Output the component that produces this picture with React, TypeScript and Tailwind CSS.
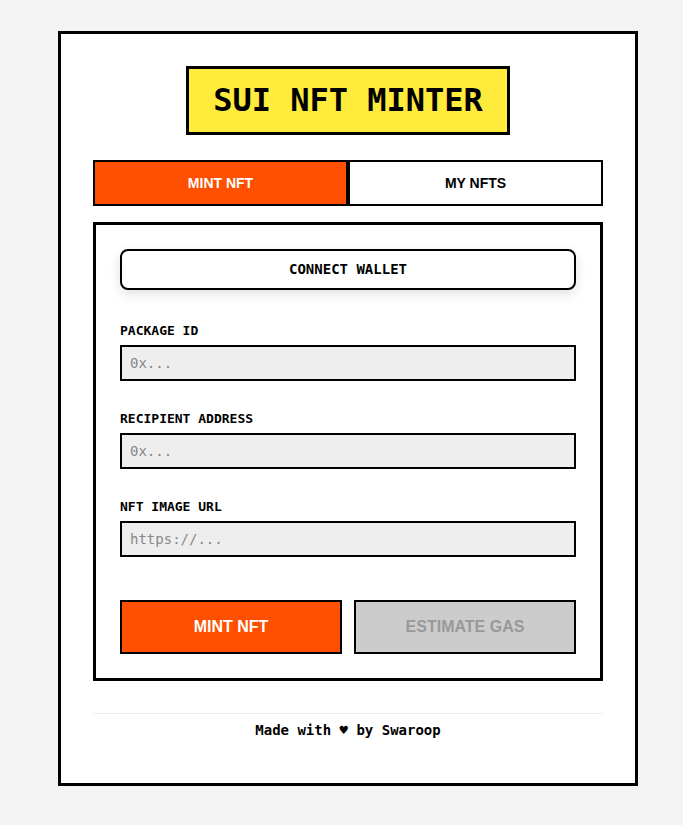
import React from 'react';

const mono = "font-['DejaVu_Sans_Mono',monospace]";
const sans = "font-['Liberation_Sans',Arial,sans-serif]";

type FieldProps = {
  label: string;
  placeholder: string;
};

const Field: React.FC<FieldProps> = ({ label, placeholder }) => {
  return (
    <div className="mb-[30px]">
      <label className={`block mb-[7px] text-[13px] leading-[15px] font-bold text-black ${mono}`}>
        {label}
      </label>
      <input
        className={`block h-[36px] w-full border-2 border-black bg-[#eeeeee] px-2 text-[14px] leading-[16px] outline-none placeholder:text-[#888888] ${mono}`}
        placeholder={placeholder}
      />
    </div>
  );
};

const App: React.FC = () => {
  return (
    <div className="min-h-[825px] bg-[#f4f4f4] pt-[31px] pb-10">
      <div className="ml-[58px] w-[580px] border-[3px] border-black bg-white p-8">
        <div className="flex justify-center">
          <h1
            className={`border-[3px] border-black bg-[#ffeb3b] px-6 py-[13px] text-[32px] leading-[37px] font-bold text-black ${mono}`}
          >
            SUI NFT MINTER
          </h1>
        </div>

        <div className={`mt-[25px] mb-4 flex ${sans}`}>
          <button className="flex-1 border-2 border-black bg-[#ff4f00] h-[46px] text-[14px] font-bold text-white">
            MINT NFT
          </button>
          <button className="flex-1 border-2 border-black bg-white h-[46px] text-[14px] font-bold text-black">
            MY NFTS
          </button>
        </div>

        <div className="border-[3px] border-black p-6">
          <button
            className={`mb-[33px] h-[41px] w-full rounded-lg border-2 border-black bg-white text-[14px] leading-[17px] font-bold text-black shadow-[0_4px_12px_rgba(0,0,0,0.12)] ${mono}`}
          >
            CONNECT WALLET
          </button>

          <Field label="PACKAGE ID" placeholder="0x..." />
          <Field label="RECIPIENT ADDRESS" placeholder="0x..." />
          <Field label="NFT IMAGE URL" placeholder="https://..." />

          <div className={`mt-[43px] flex gap-3 ${sans}`}>
            <button className="h-[54px] flex-1 border-2 border-black bg-[#ff4f00] text-[16px] leading-[18px] font-bold text-white">
              MINT NFT
            </button>
            <button className="h-[54px] flex-1 border-2 border-black bg-[#cccccc] text-[16px] leading-[18px] font-bold text-[#999999]">
              ESTIMATE GAS
            </button>
          </div>
        </div>

        <div className={`mt-8 border-t border-[#eeeeee] pt-[6px] pb-[11px] text-center text-[14px] leading-[20px] font-bold text-black ${mono}`}>
          Made with ♥ by Swaroop
        </div>
      </div>
    </div>
  );
};

export default App;
